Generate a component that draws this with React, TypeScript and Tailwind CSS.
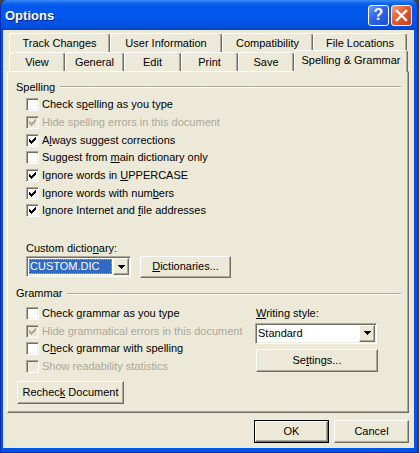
import React from "react";

const face = "font-['Liberation_Sans',Arial,sans-serif]";

// classic 3D edges
const raised =
  "border border-t-white border-l-white border-r-[#716F64] border-b-[#716F64] shadow-[inset_-1px_-1px_0_#ACA899]";
const sunken =
  "border border-t-[#ACA899] border-l-[#ACA899] border-r-white border-b-white shadow-[inset_1px_1px_0_#716F64,inset_-1px_-1px_0_#F1EFE2]";

const tick =
  "M0 2h1v3H0zM1 3h1v3H1zM2 4h1v3H2zM3 3h1v3H3zM4 2h1v3H4zM5 1h1v3H5zM6 0h1v3H6z";

function Check({ on, off }: { on?: boolean; off?: boolean }) {
  return (
    <span
      className={`flex h-[13px] w-[13px] shrink-0 items-center justify-center ${sunken} ${
        off ? "bg-[#ECE9D8]" : "bg-white"
      }`}
    >
      {on && (
        <svg width="7" height="7" viewBox="0 0 7 7" shapeRendering="crispEdges">
          <path d={tick} fill={off ? "#ACA899" : "#000"} />
        </svg>
      )}
    </span>
  );
}

function Row({ on, off, children }: { on?: boolean; off?: boolean; children: React.ReactNode }) {
  return (
    <div className="flex h-[17.67px] items-center gap-[3px]">
      <Check on={on} off={off} />
      <span className={off ? "text-[#ACA899]" : ""}>{children}</span>
    </div>
  );
}

function Heading({ children }: { children: React.ReactNode }) {
  return (
    <div className="flex h-[14px] items-center gap-[5px]">
      <span>{children}</span>
      <div className="h-[2px] flex-1 border-t border-b border-t-[#ACA899] border-b-white" />
    </div>
  );
}

function Arrow() {
  return (
    <div className={`flex h-full w-[16px] shrink-0 items-center justify-center bg-[#ECE9D8] ${raised}`}>
      <svg width="7" height="4" viewBox="0 0 7 4" shapeRendering="crispEdges">
        <path d="M0 0h7v1H0zM1 1h5v1H1zM2 2h3v1H2zM3 3h1v1H3z" fill="#000" />
      </svg>
    </div>
  );
}

function Button({ className, children, primary }: { className: string; children: React.ReactNode; primary?: boolean }) {
  const body = (
    <div className={`flex h-full w-full items-center justify-center bg-[#ECE9D8] ${raised}`}>{children}</div>
  );
  return primary ? (
    <div className={`border border-black ${className}`}>{body}</div>
  ) : (
    <div className={className}>{body}</div>
  );
}

function Tab({ className, label, active }: { className: string; label: string; active?: boolean }) {
  return (
    <div
      className={`flex items-center justify-center rounded-t-[3px] border-t border-l border-r border-t-white border-l-white border-r-[#716F64] bg-[#ECE9D8] shadow-[inset_-1px_0_0_#ACA899] ${
        active ? "relative z-10 -mb-px h-[22px] pb-[2px]" : "h-[19px]"
      } ${className}`}
    >
      {label}
    </div>
  );
}

function TitleBar() {
  return (
    <div className="flex h-[30px] shrink-0 items-center justify-between bg-[linear-gradient(180deg,#3A8CF8_0px,#1466EE_3px,#0058EE_6px,#0357EA_18px,#0051E0_26px,#0042C9_30px)] pl-[4px] pr-[5px]">
      <span className="text-[13px] font-bold text-white [text-shadow:1px_1px_0_#0A1E8C]">Options</span>
      <div className="flex gap-[2px]">
        <div className="flex h-[21px] w-[21px] items-center justify-center rounded-[3px] border border-white bg-[linear-gradient(135deg,#6C9CF7_0%,#2C64EA_45%,#1B4FD3_100%)] text-[16px] font-bold leading-none text-white">
          ?
        </div>
        <div className="flex h-[21px] w-[21px] items-center justify-center rounded-[3px] border border-white bg-[linear-gradient(135deg,#F2A286_0%,#E25B33_45%,#C63D17_100%)]">
          <svg width="13" height="13" viewBox="0 0 13 13">
            <path d="M2 2L11 11M11 2L2 11" stroke="#fff" strokeWidth="2.4" strokeLinecap="square" />
          </svg>
        </div>
      </div>
    </div>
  );
}

export default function App() {
  return (
    <div className={`h-[453px] w-[419px] bg-[#404040] text-[11px] leading-[13px] text-black ${face}`}>
      <div className="flex h-[453px] w-[418px] flex-col overflow-hidden rounded-t-[7px] border-x border-b border-[#0B2BB8] bg-[#0055E5]">
        <TitleBar />
        <div className="ml-[2px] mr-[3px] h-[418px] shrink-0 bg-[#ECE9D8]">
          {/* tab strip */}
          <div className="pl-[6px] pt-[3px]">
            <div className="flex h-[19px]">
              <Tab className="w-[101px]" label="Track Changes" />
              <Tab className="w-[112px]" label="User Information" />
              <Tab className="w-[91px]" label="Compatibility" />
              <Tab className="w-[94px]" label="File Locations" />
            </div>
            <div className="flex h-[19px] items-end">
              <Tab className="w-[56px]" label="View" />
              <Tab className="w-[59px]" label="General" />
              <Tab className="w-[57px]" label="Edit" />
              <Tab className="w-[57px]" label="Print" />
              <Tab className="w-[56px]" label="Save" />
              <Tab className="w-[114px]" label="Spelling & Grammar" active />
            </div>
          </div>

          {/* page */}
          <div className={`ml-[4px] h-[342px] w-[402px] bg-[#ECE9D8] pl-[8px] pr-[7px] pt-[8px] ${raised}`}>
            <Heading>Spelling</Heading>
            <div className="ml-[10px] mt-[2px]">
              <Row>
                Check s<u>p</u>elling as you type
              </Row>
              <Row on off>
                Hide spelling errors in this document
              </Row>
              <Row on>
                A<u>l</u>ways suggest corrections
              </Row>
              <Row>
                Suggest from <u>m</u>ain dictionary only
              </Row>
              <Row on>
                Ignore words in <u>U</u>PPERCASE
              </Row>
              <Row on>
                Ignore words with num<u>b</u>ers
              </Row>
              <Row on>
                Ignore Internet and <u>f</u>ile addresses
              </Row>

              <div className="mt-[22px] flex h-[14px] items-center">
                Custom dictio<u>n</u>ary:
              </div>
              <div className="flex items-center gap-[9px]">
                <div className={`flex h-[21px] w-[105px] bg-white p-[1px] ${sunken}`}>
                  <div className="flex flex-1 p-[1px] pr-[1px]">
                    <div className="flex flex-1 items-center bg-[#316AC5] pl-[1px] text-white outline outline-1 -outline-offset-1 outline-dotted outline-[#C8B060]">
                      CUSTOM.DIC
                    </div>
                  </div>
                  <Arrow />
                </div>
                <Button className="h-[22px] w-[91px]">
                  <span>
                    <u>D</u>ictionaries...
                  </span>
                </Button>
              </div>
            </div>

            <div className="mt-[9px]">
              <Heading>Grammar</Heading>
            </div>
            <div className="mt-[4px] flex">
              <div className="ml-[10px] w-[229px]">
                <Row>
                  Check <u>g</u>rammar as you type
                </Row>
                <Row on off>
                  Hide grammatical errors in this document
                </Row>
                <Row>
                  C<u>h</u>eck grammar with spelling
                </Row>
                <Row off>Show readability statistics</Row>
              </div>
              <div className="w-[123px]">
                <div className="mt-[2px] flex h-[14px] items-center pl-[1px]">
                  <span>
                    <u>W</u>riting style:
                  </span>
                </div>
                <div className={`mt-[2px] flex h-[21px] w-[122px] bg-white p-[1px] ${sunken}`}>
                  <div className="flex flex-1 items-center pl-[1px]">Standard</div>
                  <Arrow />
                </div>
                <Button className="ml-[1px] mt-[5px] h-[23px] w-[122px]">
                  <span>
                    Se<u>t</u>tings...
                  </span>
                </Button>
              </div>
            </div>
            <Button className="ml-[1px] mt-[6px] h-[23px] w-[107px]">
              <span>
                Rechec<u>k</u> Document
              </span>
            </Button>
          </div>

          {/* dialog buttons */}
          <div className="mt-[7px] flex justify-end gap-[5px] pr-[5px]">
            <Button className="h-[23px] w-[75px]" primary>
              OK
            </Button>
            <Button className="h-[23px] w-[75px]">Cancel</Button>
          </div>
        </div>
      </div>
    </div>
  );
}
